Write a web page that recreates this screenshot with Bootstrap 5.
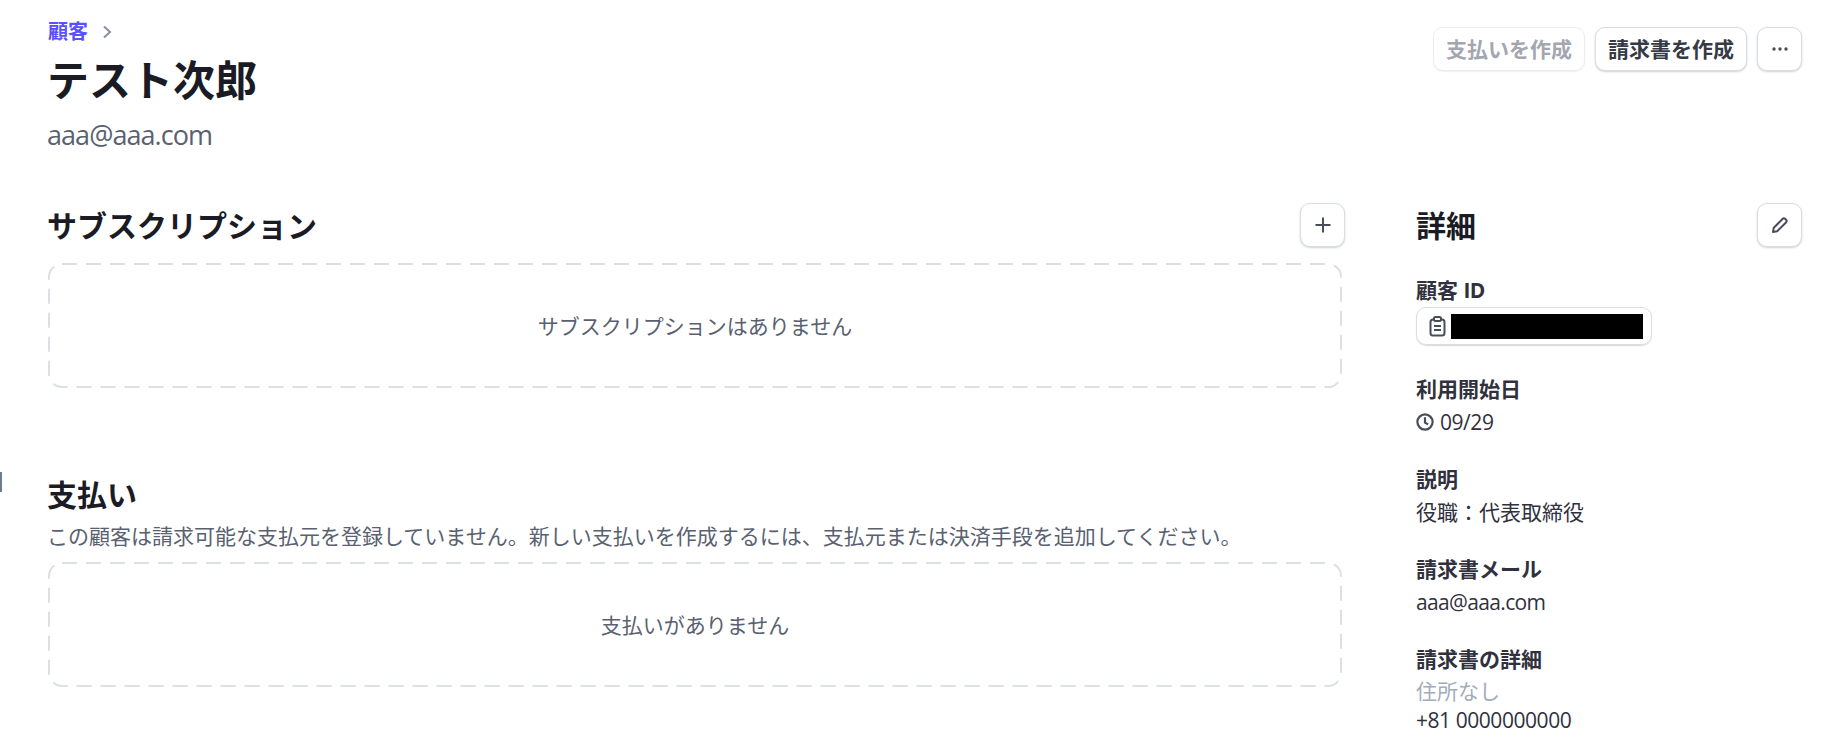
<!DOCTYPE html>
<html lang="ja">
<head>
  <meta charset="UTF-8">
  <title>テスト次郎</title>
  <link href="https://cdn.jsdelivr.net/npm/bootstrap@5.3.3/dist/css/bootstrap.min.css" rel="stylesheet">
  <style>
    body { font-family: "Open Sans", "Noto Sans CJK JP", sans-serif; font-size: 21px; line-height: 30px; color: #30313d; background: #fff; }
    .page-wrap { padding: 17px 26px 0 48px; position: relative; }
    .edge-mark { position: absolute; left: 0; top: 472px; width: 2px; height: 20px; background: #6b7c93; }
    .crumb { font-size: 20px; line-height: 30px; font-weight: 700; color: #5a50ff; text-decoration: none; }
    .crumb-sep { margin-left: 14px; color: #87909f; }
    .page-title { font-size: 42px; line-height: 60px; font-weight: 700; color: #1a1b25; margin: 3px 0 0 -1px; }
    .page-mail { font-size: 27px; line-height: 36px; color: #596171; margin: 7px 0 0 -1px; letter-spacing: -.95px; }
    .latin { letter-spacing: -.65px; }
    .latin-num { letter-spacing: -.45px; }
    .act-btn { height: 44px; padding: 0 12px; font-size: 21px; line-height: 1; font-weight: 700; color: #353a44; background: #fff; border: 1px solid #d8dee4; border-radius: 10px; box-shadow: 0 1px 2px rgba(64,68,82,.25); display: inline-flex; align-items: center; justify-content: center; }
    .act-btn.off { color: #a3a6b0; border-color: #ebeef1; box-shadow: 0 1px 1px rgba(64,68,82,.08); }
    .act-btn.square { width: 45px; padding: 0; }
    .top-actions { gap: 10px; margin-top: 10px; }
    .left-col { width: 1294px; }
    .right-col { width: 386px; margin-left: 74px; }
    .sec-head { margin-top: 49px; }
    .sec-head .sec-title { margin-top: 2px; }
    .left-col .sec-head { margin-right: -3px; margin-bottom: 15px; }
    .left-col .sec-title { margin-left: -1px; }
    .sec-title { font-size: 30px; line-height: 44px; font-weight: 700; color: #1a1b25; margin: 0; }
    .left-col .pay-title { margin-top: 85px; }
    .empty-box { position: relative; height: 125px; display: flex; align-items: center; justify-content: center; color: #596171; }
    .empty-box svg { position: absolute; inset: 0; width: 100%; height: 100%; }
    .empty-box rect { x: 1px; y: 1px; width: calc(100% - 2px); height: calc(100% - 2px); fill: none; stroke: #dddfe7; stroke-width: 2; stroke-dasharray: 15 9; }
    .sec-note { color: #596171; line-height: 30px; margin: 4px 0 11px -1px; }
    .info-block { margin-top: 27px; }
    .info-label { font-weight: 700; color: #30313d; line-height: 30px; margin-bottom: 3px; }
    .id-chip { width: 236px; height: 38px; border: 1px solid #d8dee4; border-radius: 10px; box-shadow: 0 1px 1px rgba(64,68,82,.2); padding-left: 12px; gap: 5px; }
    .id-chip-label { margin-bottom: 2px; }
    .after-chip { margin-top: 29px; }
    .id-mask { width: 192px; height: 25px; background: #000; }
    .date-row { gap: 6px; }
    .info-muted { color: #a3acba; margin-bottom: -1px; }
  </style>
</head>
<body>
<div class="page-wrap">
  <div class="edge-mark"></div>

  <!-- ヘッダー -->
  <div class="d-flex justify-content-between align-items-start">
    <div>
      <div class="d-flex align-items-center">
        <a class="crumb" href="#">顧客</a>
        <svg class="crumb-sep" width="10" height="14" viewBox="0 0 10 14" fill="none" stroke="currentColor" stroke-width="2"><path d="M2 1.5 8 7 2 12.5"/></svg>
      </div>
      <h1 class="page-title">テスト次郎</h1>
      <div class="page-mail">aaa@aaa.com</div>
    </div>
    <div class="d-flex top-actions">
      <button class="act-btn off">支払いを作成</button>
      <button class="act-btn">請求書を作成</button>
      <button class="act-btn square" aria-label="more">
        <svg width="18" height="6" viewBox="0 0 18 6" fill="#474e5a"><circle cx="3" cy="3" r="1.7"/><circle cx="9" cy="3" r="1.7"/><circle cx="15" cy="3" r="1.7"/></svg>
      </button>
    </div>
  </div>

  <div class="d-flex">
    <!-- 左カラム -->
    <div class="left-col">
      <div class="d-flex justify-content-between align-items-center sec-head">
        <h2 class="sec-title">サブスクリプション</h2>
        <button class="act-btn square" aria-label="add">
          <svg width="18" height="18" viewBox="0 0 18 18" fill="none" stroke="#474e5a" stroke-width="2"><path d="M9 1.5v15M1.5 9h15"/></svg>
        </button>
      </div>
      <div class="empty-box">
        <svg><rect rx="13"/></svg>
        <span>サブスクリプションはありません</span>
      </div>
      <h2 class="sec-title pay-title">支払い</h2>
      <p class="sec-note">この顧客は請求可能な支払元を登録していません。新しい支払いを作成するには、支払元または決済手段を追加してください。</p>
      <div class="empty-box">
        <svg><rect rx="13"/></svg>
        <span>支払いがありません</span>
      </div>
    </div>

    <!-- 右カラム -->
    <div class="right-col">
      <div class="d-flex justify-content-between align-items-center sec-head">
        <h2 class="sec-title">詳細</h2>
        <button class="act-btn square" aria-label="edit">
          <svg width="18" height="18" viewBox="0 0 18 18" fill="none" stroke="#474e5a" stroke-width="2" stroke-linejoin="round"><path d="M2 16l.8-4.2L11.5 3a2 2 0 0 1 2.8 0l.7.7a2 2 0 0 1 0 2.8L6.2 15.2z"/></svg>
        </button>
      </div>
      <div class="info-block">
        <div class="info-label id-chip-label">顧客 <span class="latin">ID</span></div>
        <div class="id-chip d-flex align-items-center">
          <svg width="17" height="21" viewBox="0 0 17 21" fill="none" stroke="#474e5a" stroke-width="2"><rect x="1.5" y="3.5" width="14" height="16" rx="2.5"/><rect x="5" y="1" width="7" height="4" rx="1.5" fill="#fff"/><path d="M5 10h7M5 14h7"/></svg>
          <div class="id-mask"></div>
        </div>
      </div>
      <div class="info-block after-chip">
        <div class="info-label">利用開始日</div>
        <div class="d-flex align-items-center date-row">
          <svg width="18" height="18" viewBox="0 0 18 18" fill="none" stroke="#474e5a" stroke-width="2.2"><circle cx="9" cy="9" r="7.6"/><path d="M9 4.2V9.6l3.2 1.8"/></svg>
          <span class="latin-num">09/29</span>
        </div>
      </div>
      <div class="info-block">
        <div class="info-label">説明</div>
        <div>役職：代表取締役</div>
      </div>
      <div class="info-block">
        <div class="info-label">請求書メール</div>
        <div class="latin">aaa@aaa.com</div>
      </div>
      <div class="info-block">
        <div class="info-label id-chip-label">請求書の詳細</div>
        <div class="info-muted">住所なし</div>
        <div class="latin-num">+81 0000000000</div>
      </div>
    </div>
  </div>
</div>
</body>
</html>
